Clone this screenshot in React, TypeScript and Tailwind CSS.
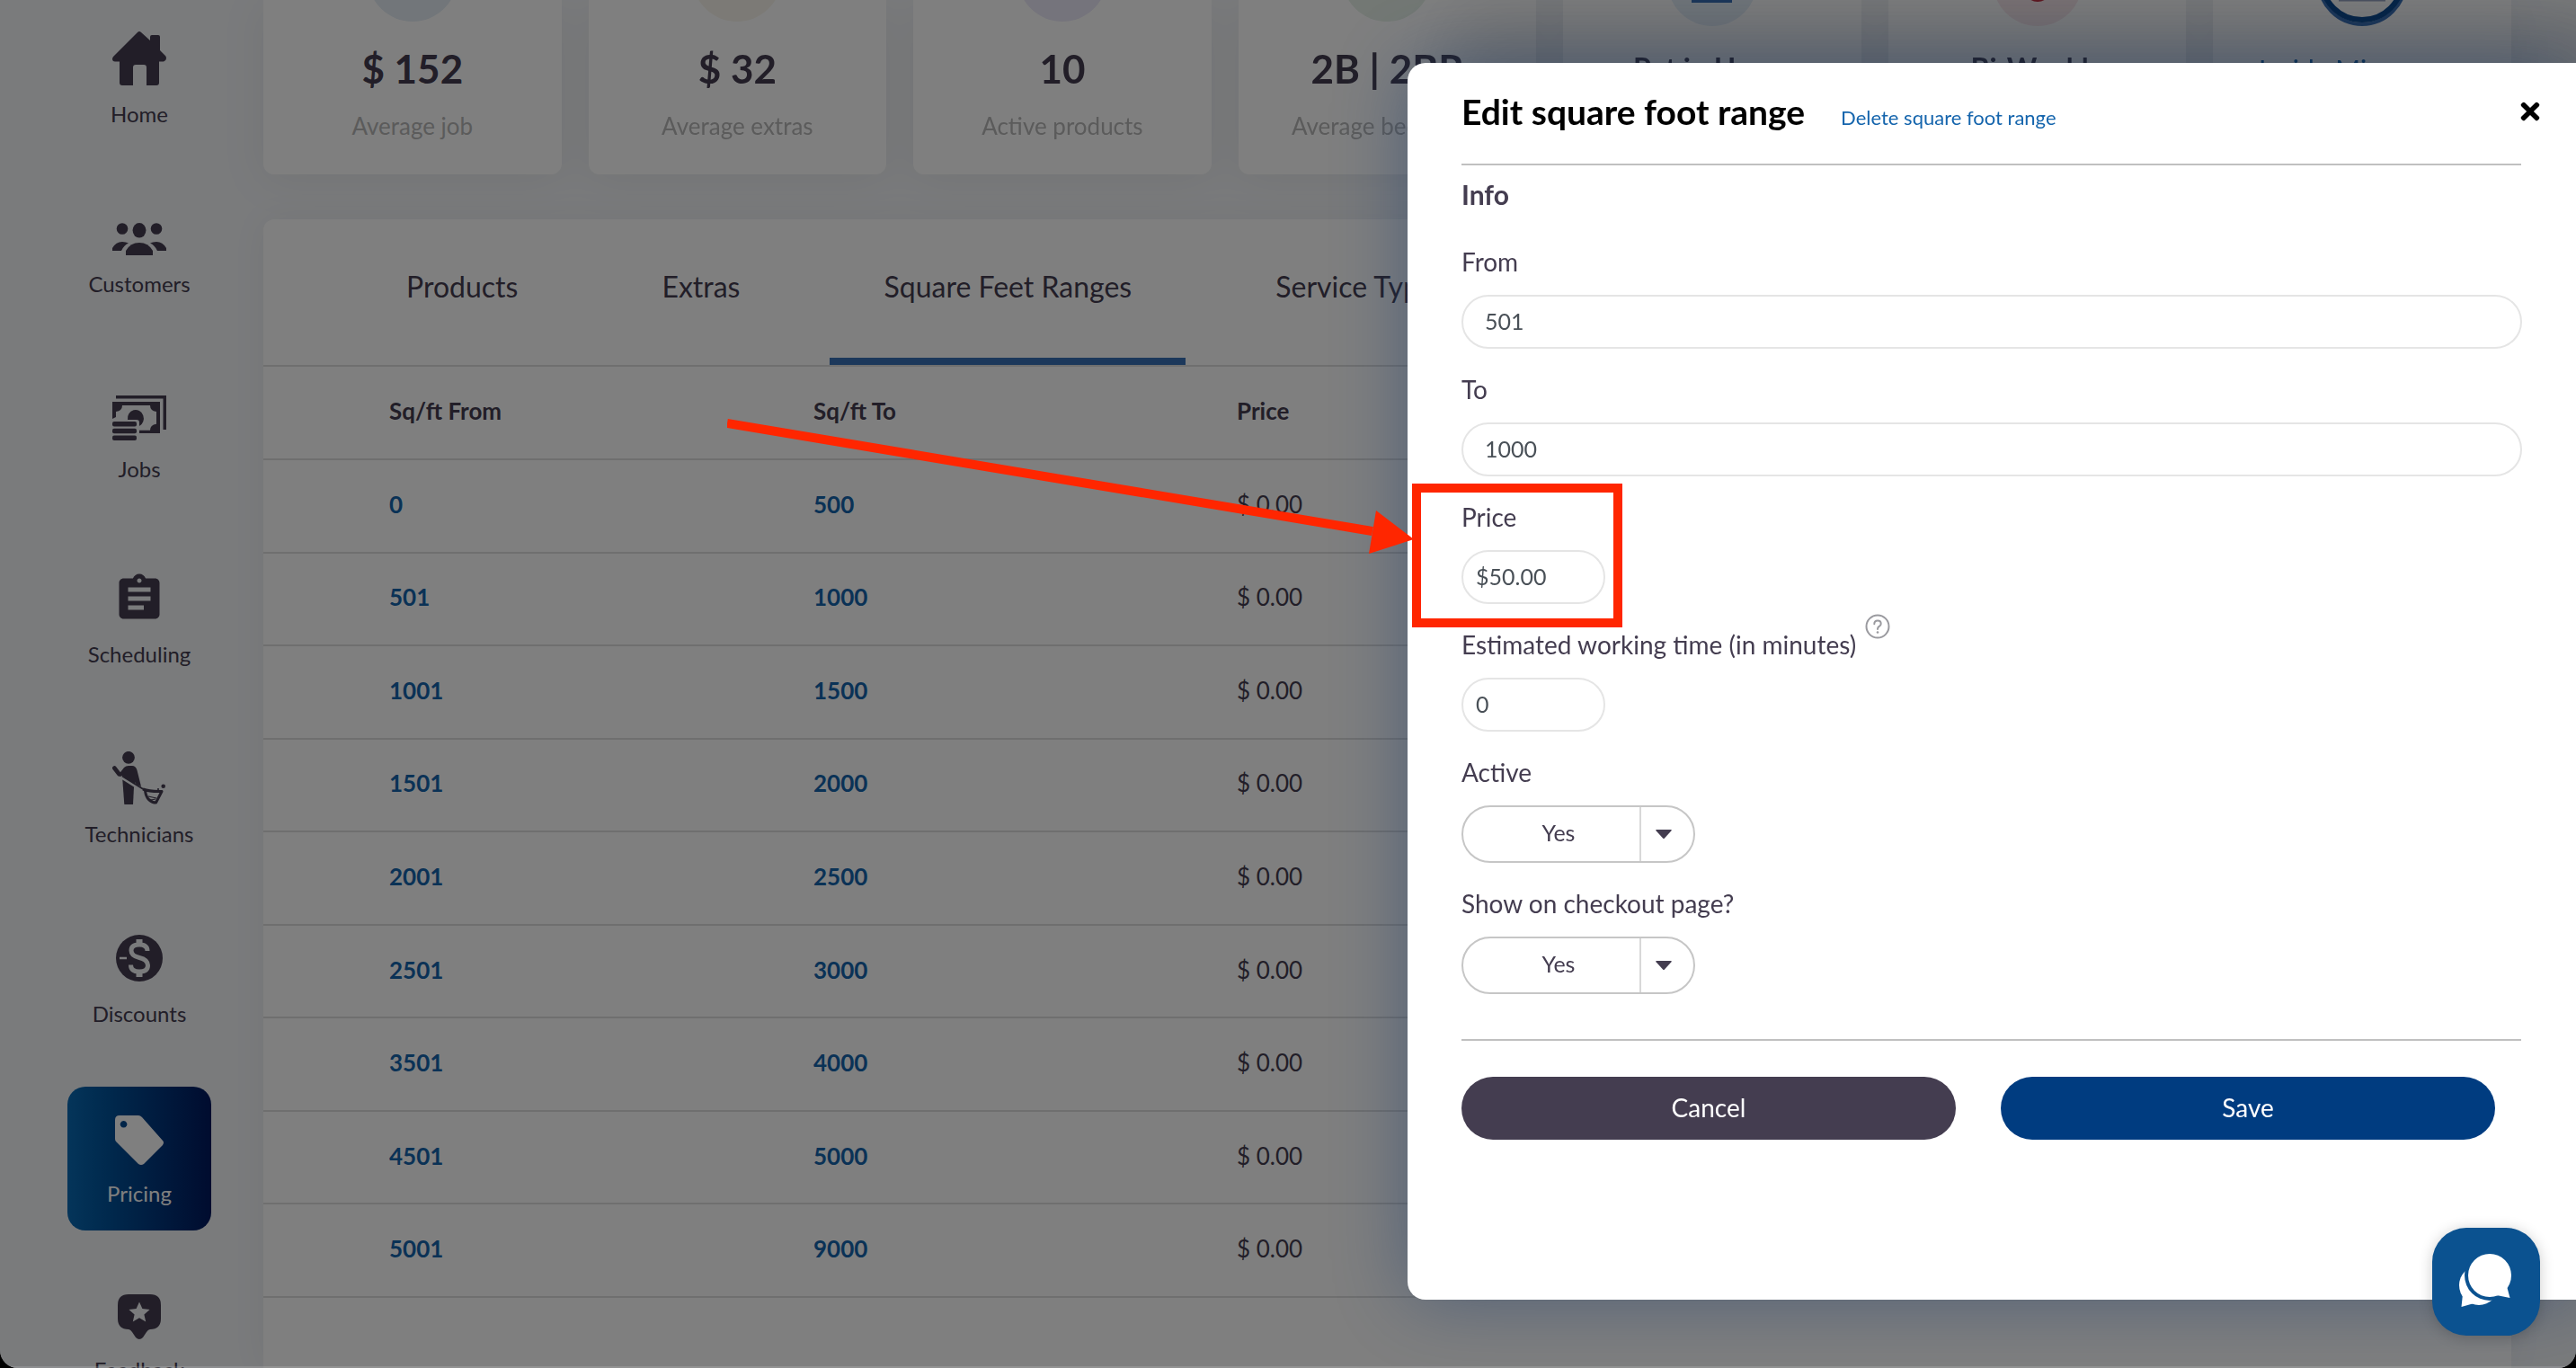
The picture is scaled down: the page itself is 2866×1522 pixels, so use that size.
import { useState, type ReactNode } from 'react'
import { MdAssignment } from 'react-icons/md'
import { FaTimes } from 'react-icons/fa'

const HomeIcon = () => (
  <svg width="60" height="60" viewBox="0 0 60 60" fill="currentColor">
    <path d="M28 1q2-2 4 0l10 9V6q0-2 2-2h7q2 0 2 2v15l6 6q1 1 1 3t-3 3.500h-5V57q0 3-3 3H38V40q0-3-3-3H26q-3 0-3 3v20H11q-3 0-3-3V33.500H3q-3 0-3-3 0-1.600 1.500-3z" />
  </svg>
)

const CustomersIcon = () => (
  <svg width="60" height="36" viewBox="0 0 60 36" fill="currentColor">
    <circle cx="11" cy="6.500" r="6.300" />
    <circle cx="49" cy="6.500" r="6.300" />
    <ellipse cx="30" cy="8.300" rx="7.400" ry="8.300" />
    <path d="M15 36v-5q5-9 15-9t15 9v5z" />
    <path d="M0 31v-3q4-7 11-7 4 0 7 1.500-5 2-8 8.500z" />
    <path d="M60 31v-3q-4-7-11-7-4 0-7 1.500 5 2 8 8.500z" />
  </svg>
)

const JobsIcon = () => (
  <svg width="60" height="50" viewBox="0 0 60 50" fill="currentColor">
    <path d="M4 0h56v38h-3.500V3.500H4z" />
    <path d="M0 7h53v35H30v-3.200h12q0-6 7-7V18q-7-1-7-7H11q0 6-7 7v6l-4 2z" />
    <path d="M17 27a9 9.500 0 1 1 13 7v-4q0-3-3-3z" />
    <rect y="29" width="27" height="5.500" rx="2" />
    <rect y="36.700" width="27" height="5.500" rx="2" />
    <rect y="44.400" width="27" height="5.500" rx="2" />
  </svg>
)

const TechniciansIcon = () => (
  <svg width="60" height="60" viewBox="0 0 60 60" fill="currentColor">
    <circle cx="18" cy="6.800" r="6.900" />
    <path d="M2.300 18.500l5 6.500" stroke="currentColor" strokeWidth="4.600" strokeLinecap="round" />
    <path d="M6 27l7-9q2-2 5-2h4q4 0 5.500 5L32 39l-5-2-2-3 1 3-15-10-2 1z" />
    <path d="M11.300 31.500L24 39.500 23 59H13.300z" />
    <path d="M11 27.500L36 43" stroke="currentColor" strokeWidth="1.800" />
    <path d="M34 42q8 3 21 2.500L48.500 57q-4 0-8-3.500-3-3-4-9.500" fill="none" stroke="currentColor" strokeWidth="3" strokeLinejoin="round" />
    <path d="M40 50l9 2M43 54l5-1" stroke="currentColor" strokeWidth="1.200" />
    <circle cx="56.700" cy="38.700" r="2.300" />
    <circle cx="51" cy="42" r="1.100" />
  </svg>
)

const DiscountsIcon = () => (
  <svg width="54" height="56" viewBox="0 0 54 56" fill="none">
    <circle cx="27" cy="26" r="26" fill="currentColor" />
    <g stroke="#f4f6f9">
      <path d="M5 26h8" strokeWidth="2.500" />
      <path d="M36 18q0-7-9-7t-9 6.500q0 6 9 8t9.500 8.500q0 7-9.500 7t-9.500-7.500" strokeWidth="5" />
      <path d="M27 5v6M27 41v6" strokeWidth="7" />
    </g>
  </svg>
)

const PricingIcon = () => (
  <svg width="54" height="55" viewBox="0 0 54 55" fill="currentColor" fillRule="evenodd">
    <path d="M0 5q0-5 5-5h21q2 0 4 2l23 26q2 2 0 5L32 54q-3 2-6 0L1 29q-1-1-1-3zM9.500 6a3.800 3.800 0 1 0 .1 0z" />
  </svg>
)

const FeedbackIcon = () => (
  <svg width="48" height="52" viewBox="0 0 48 52">
    <path d="M12 0h24q12 0 12 12v15q0 12-12 12-2 0-4 3l-4 6q-4 4-8 0l-4-6q-2-3-4-3Q0 39 0 27V12Q0 0 12 0z" fill="currentColor" />
    <path d="M24 8.500l3.400 7.600 8.200.8-6.200 5.500 1.800 8.100-7.200-4.200-7.200 4.200 1.800-8.100-6.200-5.500 8.200-.8z" fill="#f4f6f9" />
  </svg>
)

const ChatIcon = () => (
  <svg width="120" height="120" viewBox="0 0 120 120" fill="#fff">
    <circle cx="52" cy="64" r="22" />
    <path d="M34 74l-1.500 14 14-4z" />
    <circle cx="64" cy="53" r="28" fill="#0b5290" />
    <circle cx="64" cy="53" r="24" />
    <path d="M83 65l3.500 13-15-3z" />
  </svg>
)

const navItems = [
  { label: 'Home', icon: <HomeIcon />, height: 'h-[168px]' },
  { label: 'Customers', icon: <CustomersIcon />, height: 'h-[189px]' },
  { label: 'Jobs', icon: <JobsIcon />, height: 'h-[206px]' },
  { label: 'Scheduling', icon: <MdAssignment size={60} />, height: 'h-[206px]' },
  { label: 'Technicians', icon: <TechniciansIcon />, height: 'h-[200px]' },
  { label: 'Discounts', icon: <DiscountsIcon />, height: 'h-[200px]' },
  { label: 'Pricing', icon: <PricingIcon />, height: 'h-[200px]', active: true },
  { label: 'Feedback', icon: <FeedbackIcon />, height: 'h-[196px]' },
]

const stats = [
  { value: '$ 152', label: 'Average job', circle: 'bg-[#e4edf4]' },
  { value: '$ 32', label: 'Average extras', circle: 'bg-[#f8f5ec]' },
  { value: '10', label: 'Active products', circle: 'bg-[#ebe9f8]' },
  { value: '2B | 2BR', label: 'Average bedrooms', circle: 'bg-[#e6f1e8]' },
]

const tabs = ['Products', 'Extras', 'Square Feet Ranges', 'Service Types']

const ranges = [
  [0, 500],
  [501, 1000],
  [1001, 1500],
  [1501, 2000],
  [2001, 2500],
  [2501, 3000],
  [3501, 4000],
  [4501, 5000],
  [5001, 9000],
]

const Sidebar = () => (
  <nav className="w-[293px] shrink-0 pl-[75px]">
    {navItems.map((n) => (
      <div key={n.label} className={`flex items-end ${n.height}`}>
        <a href="#" className={`flex h-40 w-40 flex-col items-center justify-end gap-4 rounded-[20px] pb-[25px] ${
          n.active ? 'bg-linear-to-r from-[#0a6ab4] to-[#00185e] text-white' : 'text-[#443d50]'
        }`}>
          {n.icon}
          <span className="text-2xl">{n.label}</span>
        </a>
      </div>
    ))}
  </nav>
)

const Card = ({ children }: { children: ReactNode }) => (
  <div className="flex h-[194px] flex-col items-center overflow-hidden rounded-b-xl bg-white whitespace-nowrap">{children}</div>
)

const Stats = () => (
  <div className="grid grid-cols-7 gap-[30px] drop-shadow-[0_6px_24px_rgba(0,0,0,0.06)]">
    {stats.map((s) => (
      <Card key={s.label}>
        <div className={`-mt-[76px] h-[100px] w-[100px] shrink-0 rounded-full ${s.circle}`} />
        <p className="mt-6 text-[44px] leading-[56px] font-bold">{s.value}</p>
        <p className="mt-5 text-[26px] leading-8 text-[#b7b7b7]">{s.label}</p>
      </Card>
    ))}
    <Card>
      <svg className="-mt-[71px] shrink-0" width="100" height="100" viewBox="0 0 100 100">
        <circle cx="50" cy="50" r="50" fill="#e5eff9" />
        <rect x="27" y="54" width="45" height="20" fill="#3970b7" />
      </svg>
      <p className="mt-[27px] text-[32px] leading-10 font-bold">Pet in Home</p>
    </Card>
    <Card>
      <svg className="-mt-[71px] shrink-0" width="100" height="100" viewBox="0 0 100 100">
        <circle cx="50" cy="50" r="50" fill="#f9e8ec" />
        <circle cx="50" cy="58" r="15" fill="#c22f40" />
      </svg>
      <p className="mt-[27px] text-[32px] leading-10 font-bold">Bi-Weekly</p>
    </Card>
    <Card>
      <svg className="-mt-[71px] shrink-0" width="100" height="101" viewBox="0 0 100 101">
        <circle cx="50" cy="50" r="48" fill="#fff" stroke="#3970b7" strokeWidth="4" />
        <circle cx="50" cy="48" r="45" fill="#fff" stroke="#0a4a92" strokeWidth="6" />
        <path d="M24 71h52" stroke="#9aa3c4" strokeWidth="3" />
      </svg>
      <p className="mt-[27px] text-[30px] leading-10 text-[#1565ad]">Inside Microwave</p>
    </Card>
  </div>
)

const RangesTable = () => (
  <section className="mt-[50px] grow rounded-t-xl bg-white shadow-[0_0_40px_rgba(0,0,0,0.05)]">
    <div className="flex gap-10 border-b-2 border-[#dedede] pl-[99px]">
      {tabs.map((t) => (
        <button key={t} className={`h-[162px] border-b-8 px-[60px] pb-1 text-[32px] leading-10 ${
          t === 'Square Feet Ranges' ? 'border-[#3970b7]' : 'border-transparent'
        }`}>
          {t}
        </button>
      ))}
    </div>
    <table className="h-[1036px] w-full table-fixed text-left text-[26px] leading-8">
      <thead>
        <tr className="h-[103px] border-b-2 border-[#dedede]">
          <th className="w-[612px] pb-1 pl-[140px]">Sq/ft From</th>
          <th className="w-[471px] pb-1">Sq/ft To</th>
          <th className="pb-1">Price</th>
        </tr>
      </thead>
      <tbody>
        {ranges.map(([from, to]) => (
          <tr key={from} className="h-[103px] border-b-2 border-[#dedede]">
            <td className="pb-1 pl-[140px] font-bold text-[#1565ad]"><a href="#">{from}</a></td>
            <td className="pb-1 font-bold text-[#1565ad]"><a href="#">{to}</a></td>
            <td className="pb-1">$ 0.00</td>
          </tr>
        ))}
      </tbody>
    </table>
  </section>
)

const labelClass = 'text-[28px] leading-10'
const inputClass = 'h-[60px] rounded-full border-2 border-[#e5e5e5] bg-white pb-0.5 text-[25px] text-[#495057] outline-none'

const YesNo = ({ id, label }: { id: string; label: string }) => {
  const [value, setValue] = useState('Yes')
  return (
    <div className="flex flex-col items-start gap-[17px]">
      <label htmlFor={id} className={labelClass}>{label}</label>
      <div className="relative">
        <select id={id} value={value} onChange={(e) => setValue(e.target.value)}
          className="h-16 w-[260px] appearance-none rounded-full border-2 border-[#c6c6c6] bg-white pr-[60px] pb-0.5 pl-4 text-[25px] [text-align-last:center] outline-none">
          <option>Yes</option>
          <option>No</option>
        </select>
        <div className="pointer-events-none absolute inset-y-0.5 right-0.5 flex w-[60px] items-center border-l-2 border-[#d8d8d8] pl-4">
          <svg width="18" height="10" viewBox="0 0 18 10"><path d="M1 0h16q1.500 0 .5 1.200L10 9.500q-1 1-2 0L.5 1.200Q-.5 0 1 0z" fill="#443d50" /></svg>
        </div>
      </div>
    </div>
  )
}

const EditRange = () => {
  const [from, setFrom] = useState('501')
  const [to, setTo] = useState('1000')
  const [price, setPrice] = useState('$50.00')
  const [time, setTime] = useState('0')

  return (
    <div role="dialog" aria-labelledby="edit-title"
      className="absolute top-[70px] right-0 bottom-[76px] w-[1300px] rounded-l-[20px] bg-white px-[60px] pt-[30px] shadow-[0_0_84px_rgba(32,64,112,0.5),50px_-50px_80px_rgba(0,0,0,0.15)]">
      <div className="-mr-6 flex items-center justify-between">
        <div className="flex items-baseline gap-10">
          <h2 id="edit-title" className="text-[39px] leading-[48px] font-bold text-black">Edit square foot range</h2>
          <a href="#" className="text-[22px] text-[#1565ad]">Delete square foot range</a>
        </div>
        <button aria-label="Close" className="text-black"><FaTimes size={30} /></button>
      </div>
      <hr className="mt-[34px] mr-px border-t-2 border-[#c0c0c0]" />
      <h3 className="mt-3 text-[30px] leading-10 font-bold">Info</h3>

      <form className="mt-[35px]">
        <div className="flex flex-col gap-[25px]">
          <div className="flex flex-col gap-[17px]">
            <label htmlFor="from" className={labelClass}>From</label>
            <input id="from" value={from} onChange={(e) => setFrom(e.target.value)} className={`${inputClass} px-6`} />
          </div>
          <div className="flex flex-col gap-[17px]">
            <label htmlFor="to" className={labelClass}>To</label>
            <input id="to" value={to} onChange={(e) => setTo(e.target.value)} className={`${inputClass} px-6`} />
          </div>
          <div className="relative flex flex-col items-start gap-[17px]">
            <label htmlFor="price" className={labelClass}>Price</label>
            <input id="price" value={price} onChange={(e) => setPrice(e.target.value)} className={`${inputClass} w-40 px-3.5`} />
            {/* callout pointing at the price field */}
            <div className="pointer-events-none absolute -top-[17px] -left-[55px] h-40 w-[234px] border-[10px] border-[#ff2600]" />
            <svg className="pointer-events-none absolute -top-[90px] -left-[817px] max-w-none" width="764" height="154" viewBox="0 0 764 154" fill="#ff2600">
              <path d="M0 6L718 126" stroke="#ff2600" strokeWidth="10" />
              <path d="M722 103L764 135 714 151z" />
            </svg>
          </div>
          <div className="flex flex-col items-start gap-[17px]">
            <div className="flex items-start gap-2.5">
              <label htmlFor="time" className={labelClass}>Estimated working time (in minutes)</label>
              <svg className="-mt-3.5" width="28" height="28" viewBox="0 0 28 28" fill="none" stroke="#9a9a9f" strokeWidth="2">
                <circle cx="14" cy="14" r="12.500" />
                <path d="M10.300 11.200q0-3.700 3.700-3.700t3.700 3.400q0 1.800-2 3-1.700 1-1.700 3" strokeLinecap="round" />
                <circle cx="14" cy="20.500" r="1.300" fill="#9a9a9f" stroke="none" />
              </svg>
            </div>
            <input id="time" value={time} onChange={(e) => setTime(e.target.value)} className={`${inputClass} w-40 px-3.5`} />
          </div>
          <YesNo id="active" label="Active" />
          <YesNo id="checkout" label="Show on checkout page?" />
        </div>

        <hr className="mt-[50px] mr-px border-t-2 border-[#c0c0c0]" />
        <div className="mt-10 mr-[30px] flex gap-[50px]">
          <button type="button" className="h-[70px] flex-1 rounded-full bg-[#443d50] pb-0.5 text-[28px] text-white">Cancel</button>
          <button type="button" className="h-[70px] flex-1 rounded-full bg-[#003c80] pb-0.5 text-[28px] text-white">Save</button>
        </div>
      </form>
    </div>
  )
}

export default function App() {
  return (
    <div className="h-screen bg-black font-['Lato',sans-serif] text-[#443d50]">
      <div className="relative h-full overflow-hidden rounded-b-[20px] bg-[#f4f6f9]">
        <div className="flex h-full">
          <Sidebar />
          <main className="flex min-w-0 grow flex-col pr-[72px]">
            <Stats />
            <RangesTable />
          </main>
        </div>

        <div className="absolute inset-0 border-b-2 border-white/15 bg-black/50" />
        <EditRange />

        <button aria-label="Open chat" className="absolute right-10 bottom-9 h-[120px] w-[120px] overflow-hidden rounded-[38px] bg-[#0b5290] shadow-[0_2px_16px_rgba(0,0,0,0.2)]">
          <ChatIcon />
        </button>
      </div>
    </div>
  )
}
